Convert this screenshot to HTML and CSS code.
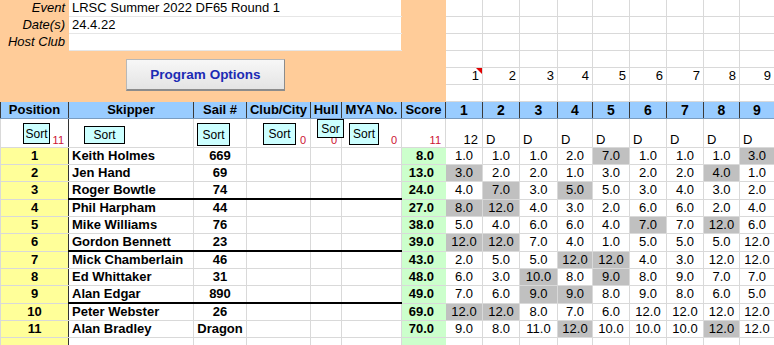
FILE: index.html
```html
<!DOCTYPE html>
<html lang="en">
<head>
  <meta charset="UTF-8" />
  <title>LRSC Summer 2022 DF65 Round 1</title>
  <link rel="stylesheet" href="styles.css">
</head>
<body>
  <table class="sheet">
    <colgroup>
      <col class="c-pos"><col class="c-skip"><col class="c-sail"><col class="c-club"><col class="c-hull"><col class="c-mya"><col class="c-score">
      <col class="c-r"><col class="c-r"><col class="c-r3"><col class="c-r4"><col class="c-r"><col class="c-r"><col class="c-r"><col class="c-r8"><col class="c-r9">
    </colgroup>
    <tbody>
      <!-- event details -->
      <tr>
        <td class="label">Event</td>
        <td class="info" colspan="5">LRSC Summer 2022 DF65 Round 1</td>
        <td class="orange"></td>
        <td></td><td></td><td></td><td></td><td></td><td></td><td></td><td></td><td></td>
      </tr>
      <tr>
        <td class="label">Date(s)</td>
        <td class="info" colspan="5">24.4.22</td>
        <td class="orange"></td>
        <td></td><td></td><td></td><td></td><td></td><td></td><td></td><td></td><td></td>
      </tr>
      <tr>
        <td class="label">Host Club</td>
        <td class="info" colspan="5"></td>
        <td class="orange"></td>
        <td></td><td></td><td></td><td></td><td></td><td></td><td></td><td></td><td></td>
      </tr>
      <tr>
        <td class="orange anchor" colspan="7">
          <button class="prog-btn">Program Options</button>
        </td>
        <td></td><td></td><td></td><td></td><td></td><td></td><td></td><td></td><td></td>
      </tr>
      <tr>
        <td class="orange" colspan="7"></td>
        <td class="race-no anchor">1<span class="comment"></span></td>
        <td class="race-no">2</td><td class="race-no">3</td><td class="race-no">4</td><td class="race-no">5</td>
        <td class="race-no">6</td><td class="race-no">7</td><td class="race-no">8</td><td class="race-no">9</td>
      </tr>
      <tr>
        <td class="orange" colspan="7"></td>
        <td></td><td></td><td></td><td></td><td></td><td></td><td></td><td></td><td></td>
      </tr>

      <!-- column headers -->
      <tr class="head">
        <th class="h-pos">Position</th>
        <th>Skipper</th>
        <th>Sail #</th>
        <th>Club/City</th>
        <th>Hull</th>
        <th>MYA No.</th>
        <th>Score</th>
        <th class="h-race">1</th><th class="h-race">2</th><th class="h-race">3</th><th class="h-race">4</th><th class="h-race">5</th>
        <th class="h-race">6</th><th class="h-race">7</th><th class="h-race">8</th><th class="h-race">9</th>
      </tr>

      <!-- sort buttons -->
      <tr class="sort">
        <td class="anchor bd-pos"><button class="sort-btn s-pos">Sort</button><span class="count">11</span></td>
        <td class="anchor"><button class="sort-btn s-skip">Sort</button></td>
        <td class="anchor"><button class="sort-btn s-sail">Sort</button></td>
        <td class="anchor"><button class="sort-btn s-club">Sort</button><span class="count">0</span></td>
        <td class="anchor"><span class="count">0</span><button class="sort-btn s-hull">Sor</button></td>
        <td class="anchor"><button class="sort-btn s-mya">Sort</button><span class="count">0</span></td>
        <td><span class="count">11</span></td>
        <td class="r-first first-count">12</td>
        <td class="dnf">D</td><td class="dnf">D</td><td class="dnf">D</td><td class="dnf">D</td>
        <td class="dnf">D</td><td class="dnf">D</td><td class="dnf">D</td><td class="dnf">D</td>
      </tr>
    </tbody>
    <tbody id="results"></tbody>
  </table>

  <script>
    // results: [pos, skipper, sail, score, races] - races marked with * are discards
    var results = [
      [1, "Keith Holmes", "669", "8.0", "1.0 1.0 1.0 2.0 *7.0 1.0 1.0 1.0 *3.0"],
      [2, "Jen Hand", "69", "13.0", "*3.0 2.0 2.0 1.0 3.0 2.0 2.0 *4.0 1.0"],
      [3, "Roger Bowtle", "74", "24.0", "4.0 *7.0 3.0 *5.0 5.0 3.0 4.0 3.0 2.0"],
      [4, "Phil Harpham", "44", "27.0", "*8.0 *12.0 4.0 3.0 2.0 6.0 6.0 2.0 4.0"],
      [5, "Mike Williams", "76", "38.0", "5.0 4.0 6.0 6.0 4.0 *7.0 7.0 *12.0 6.0"],
      [6, "Gordon Bennett", "23", "39.0", "*12.0 *12.0 7.0 4.0 1.0 5.0 5.0 5.0 12.0"],
      [7, "Mick Chamberlain", "46", "43.0", "2.0 5.0 5.0 *12.0 *12.0 4.0 3.0 12.0 12.0"],
      [8, "Ed Whittaker", "31", "48.0", "6.0 3.0 *10.0 8.0 *9.0 8.0 9.0 7.0 7.0"],
      [9, "Alan Edgar", "890", "49.0", "7.0 6.0 *9.0 *9.0 8.0 9.0 8.0 6.0 5.0"],
      [10, "Peter Webster", "26", "69.0", "*12.0 *12.0 8.0 7.0 6.0 12.0 12.0 12.0 12.0"],
      [11, "Alan Bradley", "Dragon", "70.0", "9.0 8.0 11.0 *12.0 10.0 10.0 10.0 *12.0 12.0"]
    ];

    var html = "";
    results.forEach(function (r) {
      var split = (r[0] % 3 === 0 && r[0] < 10) ? " split" : "";
      html += '<tr class="result' + split + '">';
      html += '<td class="pos">' + r[0] + '</td>';
      html += '<td class="skipper">' + r[1] + '</td>';
      html += '<td class="sail">' + r[2] + '</td>';
      html += '<td class="line"></td><td class="line"></td><td class="line"></td>';
      html += '<td class="score">' + r[3] + '</td>';
      r[4].split(" ").forEach(function (v, i) {
        var cls = "race" + (i === 0 ? " r-first" : "");
        if (v.charAt(0) === "*") {
          cls += " discard";
          v = v.slice(1);
        }
        html += '<td class="' + cls + '">' + v + '</td>';
      });
      html += '</tr>';
    });
    // empty row at the bottom
    html += '<tr class="result"><td class="pos"></td><td></td><td></td><td></td><td></td><td></td><td class="score"></td>';
    html += '<td class="r-first"></td><td></td><td></td><td></td><td></td><td></td><td></td><td></td><td></td></tr>';

    document.getElementById("results").innerHTML = html;
  </script>
</body>
</html>
```

FILE: styles.css
```css
body {
  margin: 0;
  overflow: hidden;
  background: #fff;
  font-family: 'Liberation Sans', Arial, sans-serif;
  font-size: 13px;
  color: #000;
}

.sheet {
  border-collapse: collapse;
  table-layout: fixed;
  width: 774px;
}

.c-pos { width: 68px; }
.c-skip { width: 125px; }
.c-sail { width: 53px; }
.c-club { width: 64px; }
.c-hull { width: 31px; }
.c-mya { width: 60px; }
.c-score { width: 44px; }
.c-r { width: 37px; }
.c-r3 { width: 38px; }
.c-r4 { width: 35px; }
.c-r8 { width: 36px; }
.c-r9 { width: 35px; }

td, th {
  height: 16px;
  padding: 0;
  line-height: 16px;
  border: 1px solid #d9d9d9;
  white-space: nowrap;
  overflow: hidden;
}

.anchor {
  position: relative;
  overflow: visible;
}

/* top area */
.orange, .label {
  background-color: #ffcc99;
  border-color: #ffcc99;
}
.label {
  text-align: right;
  font-style: italic;
  padding-right: 3px;
}
.info {
  background-color: #fff;
  border-color: #e6e6e6 #ffcc99;
  padding-left: 3px;
}
tr:first-child td { border-top: none; }

.race-no {
  text-align: right;
  padding-right: 3px;
}
.comment {
  position: absolute;
  top: 0;
  right: 0;
  width: 0;
  height: 0;
  border-top: 6px solid #e00000;
  border-left: 6px solid transparent;
}

.prog-btn {
  position: absolute;
  left: 125px;
  top: 8px;
  width: 159px;
  height: 32px;
  background: linear-gradient(#f7f7f7, #e4e4e4);
  border: 1px solid #b8b8b8;
  border-right-color: #8c8c8c;
  border-bottom: 2px solid #8c8c8c;
  color: #1c2bb4;
  font-family: 'Liberation Sans', Arial, sans-serif;
  font-size: 13.5px;
  font-weight: bold;
  padding: 0;
  z-index: 2;
}

/* header row */
.head th {
  background-color: #99ccff;
  border: 1px solid #3a3a3a;
  border-bottom-color: #7a9cc0;
  font-weight: bold;
  text-align: center;
  height: 16px;
}
.h-race {
  font-family: 'Liberation Sans Narrow', 'Liberation Sans', sans-serif;
  font-size: 14px;
}

/* sort row */
.sort td {
  height: 28px;
  vertical-align: bottom;
  text-align: right;
  line-height: 14px;
}
.count {
  color: #cc1133;
  font-size: 11px;
  padding-right: 4px;
}
.sort-btn {
  position: absolute;
  background-color: #ccffff;
  border: 1px solid #000;
  color: #000;
  font-family: 'Liberation Sans', Arial, sans-serif;
  font-size: 12px;
  padding: 0;
  line-height: 14px;
  overflow: hidden;
  z-index: 1;
}
.s-pos { left: 22px; top: 4px; width: 27px; height: 21px; }
.s-skip { left: 15px; top: 7px; width: 41px; height: 18px; }
.s-sail { left: 3px; top: 4px; width: 33px; height: 23px; }
.s-club { left: 16px; top: 4px; width: 33px; height: 22px; }
.s-hull { left: 6px; top: 0; width: 27px; height: 19px; }
.s-mya { left: 7px; top: 4px; width: 30px; height: 22px; }

.first-count {
  padding-right: 4px;
  font-size: 13px;
}
.sort .dnf {
  text-align: left;
  padding-left: 3px;
  font-size: 13px;
}

/* results */
.pos, .bd-pos {
  border-right: 1px solid #333;
}
.pos {
  background-color: #ffff99;
  font-weight: bold;
  text-align: center;
}
.skipper {
  font-weight: bold;
  padding-left: 3px;
}
.sail {
  font-weight: bold;
  text-align: center;
}
.score {
  background-color: #ccffcc;
  font-weight: bold;
  text-align: right;
  padding-right: 11px;
  border-color: #d9d9d9 #ccffcc;
}
.r-first {
  border-left: 1px solid #555;
}
.race {
  text-align: center;
}
.discard {
  background-color: #c0c0c0;
}

.split .skipper,
.split .sail,
.split .line {
  border-bottom: 2px solid #000;
}
.split .pos {
  border-bottom-color: #d9d9d9;
}
```
